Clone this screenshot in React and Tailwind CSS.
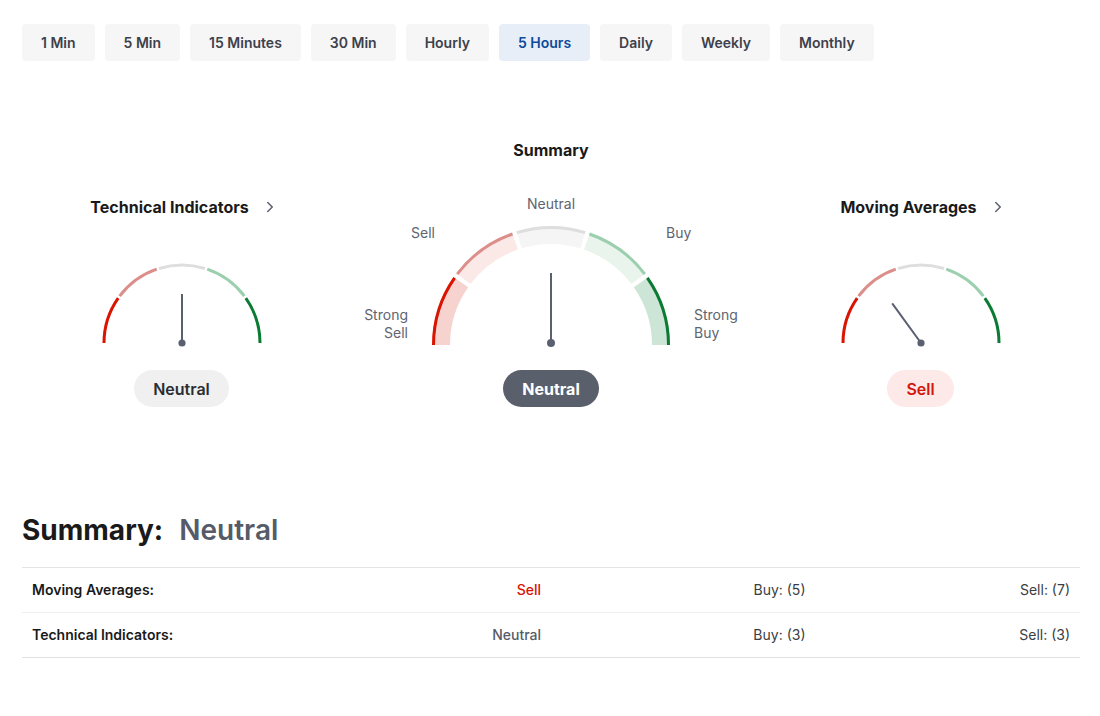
import React from 'react';
import { ChevronRight } from 'lucide-react';

const periods = ['1 Min', '5 Min', '15 Minutes', '30 Min', 'Hourly', '5 Hours', 'Daily', 'Weekly', 'Monthly'];

const strokeColors = ['#d91400', '#dc8f8a', '#dedede', '#9bcfae', '#0b7a32'];
const fillColors = ['#f7d3d0', '#fbe9e8', '#f5f5f5', '#e9f4ed', '#cde5d6'];

const pt = (cx, cy, r, deg) => {
  const a = (deg * Math.PI) / 180;
  return [cx + r * Math.cos(a), cy - r * Math.sin(a)];
};

// angle ranges for the five zones, with a small gap between them
const zones = (gap) =>
  [0, 1, 2, 3, 4].map((i) => {
    let a0 = 180 - i * 36;
    let a1 = 180 - (i + 1) * 36;
    if (i > 0) a0 -= gap / 2;
    if (i < 4) a1 += gap / 2;
    return [a0, a1];
  });

const arc = (cx, cy, r, a0, a1) => {
  const [x0, y0] = pt(cx, cy, r, a0);
  const [x1, y1] = pt(cx, cy, r, a1);
  return `M${x0} ${y0} A${r} ${r} 0 0 1 ${x1} ${y1}`;
};

const sector = (cx, cy, ro, ri, a0, a1) => {
  const [x0, y0] = pt(cx, cy, ro, a0);
  const [x1, y1] = pt(cx, cy, ro, a1);
  const [x2, y2] = pt(cx, cy, ri, a1);
  const [x3, y3] = pt(cx, cy, ri, a0);
  return `M${x0} ${y0} A${ro} ${ro} 0 0 1 ${x1} ${y1} L${x2} ${y2} A${ri} ${ri} 0 0 0 ${x3} ${y3} Z`;
};

const SmallGauge = ({ angle }) => {
  const cx = 85;
  const cy = 82;
  const [nx, ny] = pt(cx, cy, 49, angle);
  return (
    <svg width="170" height="86" viewBox="0 0 170 86">
      {zones(1.8).map(([a0, a1], i) => (
        <path key={i} d={arc(cx, cy, 78, a0, a1)} fill="none" stroke={strokeColors[i]} strokeWidth="3" />
      ))}
      <line x1={cx} y1={cy} x2={nx} y2={ny} stroke="#5b6070" strokeWidth="2" />
      <circle cx={cx} cy={cy} r="3.6" fill="#5b6070" />
    </svg>
  );
};

const BigGauge = () => {
  const cx = 125;
  const cy = 122;
  return (
    <svg width="250" height="126" viewBox="0 0 250 126">
      {zones(2.2).map(([a0, a1], i) => (
        <g key={i}>
          <path d={sector(cx, cy, 119, 101, a0, a1)} fill={fillColors[i]} />
          <path d={arc(cx, cy, 117.5, a0, a1)} fill="none" stroke={strokeColors[i]} strokeWidth="3" />
        </g>
      ))}
      <line x1={cx} y1={cy - 2} x2={cx} y2={cy - 72} stroke="#5b6070" strokeWidth="2" />
      <circle cx={cx} cy={cy - 2} r="4" fill="#5b6070" />
    </svg>
  );
};

const SideColumn = ({ title, angle, pill, pillClass }) => (
  <div className="flex w-[320px] flex-col items-center">
    <div className="flex h-6 items-center gap-[12px] pl-[6px]">
      <span className="text-base font-bold text-[#1a1a1a]">{title}</span>
      <ChevronRight size={18} strokeWidth={2} className="text-[#5b606e]" />
    </div>
    <div className="mt-[42px]">
      <SmallGauge angle={angle} />
    </div>
    <div className={`mt-[23px] flex h-[37px] items-center rounded-full px-[19px] text-base font-semibold ${pillClass}`}>
      {pill}
    </div>
  </div>
);

const rows = [
  { label: 'Moving Averages:', value: 'Sell', valueClass: 'text-[#d91400]', buy: 'Buy: (5)', sell: 'Sell: (7)', border: 'border-[#efefef]' },
  { label: 'Technical Indicators:', value: 'Neutral', valueClass: 'text-[#555b68]', buy: 'Buy: (3)', sell: 'Sell: (3)', border: 'border-[#e2e2e2]' },
];

export default function App() {
  return (
    <div className="min-h-[716px] bg-white pl-[22px] pr-[20px] pt-[24px] font-['Inter','Noto_Sans',sans-serif] text-[#1a1a1a]">
      {/* period tabs */}
      <div className="flex gap-[10px]">
        {periods.map((p) => (
          <button
            key={p}
            className={`h-[37px] rounded-[4px] px-[19px] text-sm font-semibold ${
              p === '5 Hours' ? 'bg-[#e7eef7] text-[#0d4a9a]' : 'bg-[#f6f6f6] text-[#3d414b]'
            }`}
          >
            {p}
          </button>
        ))}
      </div>

      {/* gauges */}
      <div className="mt-[77px] flex items-end justify-center gap-[50px]">
        <SideColumn title="Technical Indicators" angle={90} pill="Neutral" pillClass="bg-[#f0f0f0] text-[#2a2d33]" />

        <div className="flex w-[320px] flex-col items-center">
          <span className="h-6 text-base font-bold leading-6 text-[#1a1a1a]">Summary</span>
          <div className="relative mt-[30px] h-[157px] w-[400px]">
            <span className="absolute left-0 right-0 top-[2px] text-center text-sm leading-5 text-[#606470]">Neutral</span>
            <span className="absolute left-[60px] top-[31px] text-sm leading-5 text-[#606470]">Sell</span>
            <span className="absolute left-[315px] top-[31px] text-sm leading-5 text-[#606470]">Buy</span>
            <span className="absolute right-[343px] top-[114px] text-right text-sm leading-[18px] text-[#606470]">
              Strong
              <br />
              Sell
            </span>
            <span className="absolute left-[343px] top-[114px] text-sm leading-[18px] text-[#606470]">
              Strong
              <br />
              Buy
            </span>
            <div className="absolute bottom-0 left-[75px]">
              <BigGauge />
            </div>
          </div>
          <div className="mt-[21px] flex h-[37px] items-center rounded-full bg-[#5a5f6c] px-[19px] text-base font-bold text-white">
            Neutral
          </div>
        </div>

        <SideColumn title="Moving Averages" angle={126} pill="Sell" pillClass="bg-[#fce9e8] text-[#d1170c]" />
      </div>

      {/* summary table */}
      <div className="mt-[105px] flex h-9 items-center gap-4 text-[28px] font-bold leading-9">
        <span className="text-[#1a1a1a]">Summary:</span>
        <span className="font-semibold text-[#555b68]">Neutral</span>
      </div>

      <div className="mt-[19px] border-t border-[#e5e5e5]">
        {rows.map((r) => (
          <div key={r.label} className={`grid h-[45px] grid-cols-4 items-center border-b text-sm ${r.border}`}>
            <span className="px-[10px] font-semibold text-[#1a1a1a]">{r.label}</span>
            <span className={`px-[10px] text-right font-medium ${r.valueClass}`}>{r.value}</span>
            <span className="px-[10px] text-right text-[#3a3d44]">{r.buy}</span>
            <span className="px-[10px] text-right text-[#3a3d44]">{r.sell}</span>
          </div>
        ))}
      </div>
    </div>
  );
}
